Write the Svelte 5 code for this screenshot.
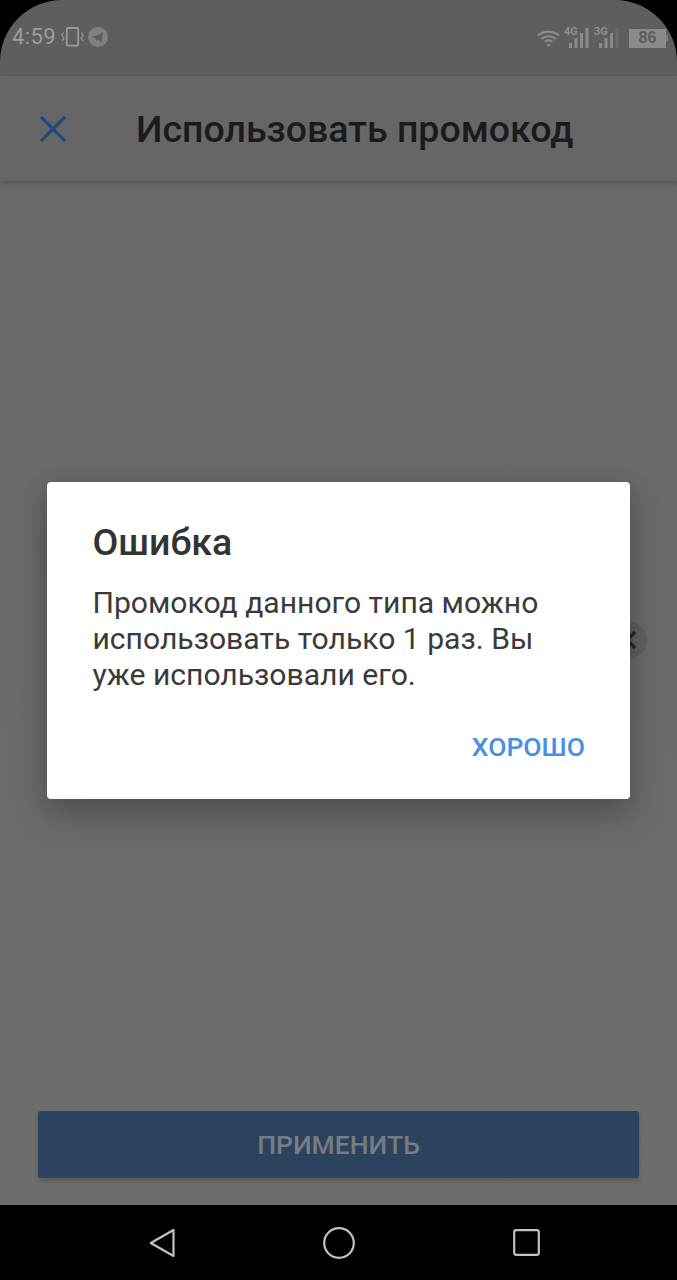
<script lang="ts">
	const title = 'Использовать промокод';
	const message = 'Промокод данного типа можно использовать только 1 раз. Вы уже использовали его.';
</script>

<div class="screen">
	<div class="statusbar">
		<div class="status-left">
			<span class="time">4:59</span>
			<svg class="vibrate" width="23" height="20" viewBox="0 0 23 20" fill="none" stroke="#9a9a9a">
				<rect x="5.8" y="1" width="11.4" height="17.6" rx="1" stroke-width="1.8" />
				<path d="M2.6 5.5 L0.8 8.5 L3 11 L1 14" stroke-width="1.1" />
				<path d="M20.4 5.5 L22.2 8.5 L20 11 L22 14" stroke-width="1.1" />
			</svg>
			<svg class="telegram" width="20" height="20" viewBox="0 0 20 20">
				<circle cx="10" cy="10" r="10" fill="#808080" />
				<path d="M3.6 10.2 L15.4 5.2 L13.4 15.2 L9.8 12.6 L8.2 14.2 L7.8 11.4 Z" fill="#5e5e5e" />
			</svg>
		</div>
		<div class="status-right">
			<svg width="23" height="19" viewBox="0 0 24 19" fill="none" stroke="#8e8e8e" stroke-width="2">
				<path d="M1 6.5 C7 1 17 1 23 6.5" />
				<path d="M4.5 10 C9 6 15 6 19.5 10" />
				<path d="M8 13 C10.5 11 13.5 11 16 13" />
				<path d="M9.5 15.5 L14.5 15.5 L12 18.5 Z" fill="#8e8e8e" stroke="none" />
			</svg>
			<div class="signal">
				<span class="net">4G</span>
				<svg width="22" height="20" viewBox="0 0 22 20" fill="#8a8a8a">
					<rect x="2" y="15" width="3" height="5" />
					<rect x="7.5" y="10" width="3" height="10" />
					<rect x="13" y="5" width="3" height="15" />
					<rect x="18.5" y="0" width="3" height="20" />
				</svg>
			</div>
			<div class="signal">
				<span class="net">3G</span>
				<svg width="22" height="20" viewBox="0 0 22 20" fill="#8a8a8a">
					<rect x="2" y="15" width="3" height="5" />
					<rect x="7.5" y="10" width="3" height="10" />
					<rect x="13" y="5" width="3" height="15" />
					<rect x="18.5" y="0" width="3" height="20" fill="#6c6c6c" />
				</svg>
			</div>
			<div class="battery"><span>86</span></div>
		</div>
	</div>

	<header class="topbar">
		<svg class="close" width="26" height="26" viewBox="0 0 26 26" stroke="#1f4a78" stroke-width="3.2">
			<path d="M1 1 L25 25 M25 1 L1 25" />
		</svg>
		<h1>{title}</h1>
	</header>

	<main class="content">
		<div class="field">
			<div class="clear">
				<svg width="20" height="20" viewBox="0 0 20 20" stroke="#262626" stroke-width="3.4">
					<path d="M2 2 L18 18 M18 2 L2 18" />
				</svg>
			</div>
		</div>
		<button class="apply">ПРИМЕНИТЬ</button>
	</main>

	<nav class="navbar">
		<svg width="26" height="30" viewBox="0 0 26 30" fill="none" stroke="#c2c2c2" stroke-width="2.2">
			<path d="M24.5 2 L24.5 28 L1.8 15 Z" stroke-linejoin="round" />
		</svg>
		<svg width="32" height="32" viewBox="0 0 32 32" fill="none" stroke="#c2c2c2" stroke-width="2.2">
			<circle cx="16" cy="16" r="14.8" />
		</svg>
		<svg class="recents" width="27" height="27" viewBox="0 0 27 27" fill="none" stroke="#c2c2c2" stroke-width="2.2">
			<rect x="1.2" y="1.2" width="24.6" height="24.6" rx="2" />
		</svg>
	</nav>

	<div class="dialog" role="alertdialog">
		<h2>Ошибка</h2>
		<p>{message}</p>
		<div class="actions">
			<button class="ok">ХОРОШО</button>
		</div>
	</div>
</div>

<style>
	:global(body) {
		background: #000;
	}

	.screen {
		position: relative;
		width: 677px;
		height: 1280px;
		display: flex;
		flex-direction: column;
		background: #000;
		font-family: Roboto, 'Noto Sans', sans-serif;
		overflow: hidden;
	}

	.statusbar {
		height: 76px;
		flex: none;
		display: flex;
		justify-content: space-between;
		align-items: flex-start;
		padding: 25px 11px 0 12px;
		box-sizing: border-box;
		background: #5e5e5e;
		border-radius: 62px 62px 0 0;
	}

	.status-left {
		display: flex;
		align-items: center;
		height: 24px;
	}

	.time {
		font-size: 22px;
		line-height: 24px;
		color: #9c9c9c;
		letter-spacing: 0.4px;
	}

	.vibrate {
		margin-left: 5px;
	}

	.telegram {
		margin-left: 4px;
	}

	.status-right {
		display: flex;
		align-items: center;
		height: 24px;
		margin-top: 1px;
	}

	.signal {
		position: relative;
		width: 22px;
		height: 20px;
		margin-left: 7px;
	}

	.signal + .signal {
		margin-left: 8px;
	}

	.net {
		position: absolute;
		left: -3px;
		top: -3px;
		font-size: 11px;
		font-weight: 700;
		color: #8e8e8e;
	}

	.battery {
		width: 37px;
		height: 19px;
		margin-left: 10px;
		background: #8b8b8b;
		display: flex;
		align-items: center;
		justify-content: center;
		position: relative;
	}

	.battery::after {
		content: '';
		position: absolute;
		right: -2px;
		top: 6px;
		width: 2px;
		height: 6px;
		background: #7a7a7a;
	}

	.battery span {
		font-family: 'Liberation Sans', sans-serif;
		font-size: 16px;
		font-weight: 700;
		color: #5c5c5c;
	}

	.topbar {
		height: 105px;
		flex: none;
		display: flex;
		align-items: center;
		padding-left: 40px;
		box-sizing: border-box;
		background: #666;
		box-shadow: 0 2px 5px rgba(0, 0, 0, 0.2);
		position: relative;
	}

	.close {
		flex: none;
	}

	h1 {
		margin: 0 0 0 70px;
		font-size: 37.5px;
		font-weight: 500;
		color: #1b1b1b;
		white-space: nowrap;
	}

	.content {
		flex: 1;
		display: flex;
		flex-direction: column;
		align-items: stretch;
		padding: 0 38px 27px;
		background: linear-gradient(#686868, #6d6d6d);
	}

	.field {
		flex: 1;
		display: flex;
		justify-content: flex-end;
		align-items: flex-start;
		padding-top: 440px;
		margin-right: -8px;
	}

	.clear {
		width: 38px;
		height: 38px;
		border-radius: 50%;
		background: #616161;
		display: flex;
		align-items: center;
		justify-content: center;
	}

	.clear svg {
		margin-right: 2px;
	}

	.apply {
		height: 67px;
		border: none;
		border-radius: 3px;
		background: #2c4360;
		color: #787b7f;
		font-family: inherit;
		font-size: 26.5px;
		font-weight: 500;
		box-shadow: 0 3px 4px rgba(0, 0, 0, 0.2);
	}

	.navbar {
		height: 75px;
		flex: none;
		display: flex;
		justify-content: center;
		align-items: center;
		gap: 148px;
		padding-left: 12px;
		background: #000;
	}

	.recents {
		margin-left: 10px;
	}

	.dialog {
		position: absolute;
		left: 47px;
		top: 482px;
		width: 583px;
		height: 317px;
		box-sizing: border-box;
		padding: 37px 45px 0 45.5px;
		background: #fff;
		border-radius: 4px;
		box-shadow: 0 18px 36px rgba(0, 0, 0, 0.2), 0 4px 24px rgba(0, 0, 0, 0.12);
	}

	h2 {
		margin: 0;
		font-size: 37.5px;
		line-height: 46px;
		font-weight: 500;
		color: #333;
	}

	p {
		margin: 20px 0 0;
		font-size: 30.1px;
		line-height: 36px;
		color: #3a3a3a;
	}

	.actions {
		display: flex;
		justify-content: flex-end;
		margin-top: 38px;
	}

	.ok {
		padding: 0;
		border: none;
		background: none;
		font-family: inherit;
		font-size: 26.5px;
		font-weight: 500;
		color: #4a90e2;
	}
</style>
